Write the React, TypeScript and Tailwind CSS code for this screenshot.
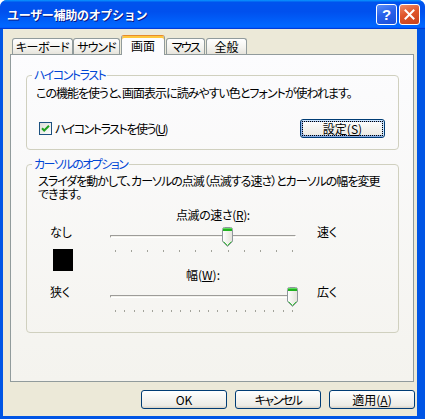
import React from "react";

const tabs = [
  { label: "キーボード", cls: "w-[61px] tracking-[-0.6px]" },
  { label: "サウンド", cls: "w-[47px] tracking-[-1px]" },
  { label: "画面", cls: "w-[44px] ml-[1px]", active: true },
  { label: "マウス", cls: "w-[39px] ml-[1px] tracking-[-1.5px]" },
  { label: "全般", cls: "w-[41px] ml-[1px]" },
];

function Thumb() {
  return (
    <svg width="11" height="20" viewBox="0 0 11 20">
      <defs>
        <linearGradient id="thumbFill" x1="0" x2="1" y1="0" y2="0">
          <stop offset="0" stopColor="#ffffff" />
          <stop offset="1" stopColor="#e3e2da" />
        </linearGradient>
      </defs>
      <path
        d="M0.5 2.5 Q0.5 0.5 2.5 0.5 H8.5 Q10.5 0.5 10.5 2.5 V14.5 L5.5 19.5 L0.5 14.5 Z"
        fill="url(#thumbFill)"
        stroke="#8f979d"
      />
      <rect x="1" y="1" width="9" height="1" fill="#5fdc5f" />
      <rect x="1" y="2" width="9" height="2" fill="#21b221" />
      <path d="M1.5 14.5 L5.5 18.5 L9.5 14.5" fill="none" stroke="#3cc43c" />
    </svg>
  );
}

function Slider({ ticks, value }: { ticks: number; value: number }) {
  const left = 5 + (value * 177) / (ticks - 1) - 5.5;
  return (
    <div className="relative w-[186px] h-[25px] flex flex-col">
      <div className="mt-[8px] h-[3px] rounded-[1px] border-t border-l border-[#9d9c99] border-b border-b-white border-r border-r-white bg-[#f3f2ec]" />
      <div className="mt-[12px] ml-[5px] w-[178px] h-[2px] flex justify-between">
        {Array.from({ length: ticks }).map((_, i) => (
          <span key={i} className="w-px h-[2px] bg-[#a3a39b]" />
        ))}
      </div>
      <div className="absolute top-0" style={{ left }}>
        <Thumb />
      </div>
    </div>
  );
}

function Button({ children, focused }: { children: React.ReactNode; focused?: boolean }) {
  return (
    <div
      className={
        focused
          ? "w-[85px] h-[19px] flex items-center justify-center rounded-[3px] border border-[#003c74] bg-[linear-gradient(180deg,#fff,#ecebe5_86%,#d8d0c4)] shadow-[inset_-1px_1px_#cee7ff,inset_1px_2px_#98b8ea,inset_-2px_2px_#bcd4f6,inset_1px_-1px_#89ade4,inset_2px_-2px_#89ade4]"
          : "w-[86px] h-[19px] flex items-center justify-center rounded-[3px] border border-[#003c74] bg-[linear-gradient(180deg,#fff,#ecebe5_86%,#d8d0c4)]"
      }
    >
      {focused ? (
        <span className="w-[77px] h-[11px] flex items-center justify-center outline-1 outline-dotted outline-black outline-offset-[1px]">
          {children}
        </span>
      ) : (
        children
      )}
    </div>
  );
}

export default function App() {
  return (
    <div className="w-[425px] h-[419px] bg-white font-['Noto_Sans_CJK_JP',sans-serif] text-[12px] leading-[13px] text-black [font-feature-settings:'palt']">
      <div className="w-[425px] h-[419px] flex flex-col rounded-t-[7px] bg-[#0055e5] overflow-hidden">
        {/* title bar */}
        <div className="h-[29px] flex items-center pl-[7px] pr-[5px] bg-[linear-gradient(180deg,#0997ff,#0053ee_8%,#0050ee_40%,#0066ff_88%,#0066ff_93%,#005bff_95%,#003dd7_96%,#003dd7)]">
          <span className="flex-1 font-bold text-white text-[12px] tracking-[-0.3px] [font-feature-settings:normal] [text-shadow:1px_1px_0_#0a1883]">
            ユーザー補助のオプション
          </span>
          <div className="w-[21px] h-[21px] rounded-[3px] border border-white bg-[linear-gradient(160deg,#5c8ff8,#2a62eb_45%,#1d4fd8)] flex items-center justify-center text-white font-bold text-[15px] leading-none font-['Liberation_Sans',sans-serif]">
            ?
          </div>
          <div className="ml-[2px] w-[21px] h-[21px] rounded-[3px] border border-white bg-[linear-gradient(160deg,#ef8c68,#e0562b_45%,#c8411d)] flex items-center justify-center">
            <svg width="11" height="11" viewBox="0 0 11 11">
              <path d="M1.5 1.5 L9.5 9.5 M9.5 1.5 L1.5 9.5" stroke="#fff" strokeWidth="2" strokeLinecap="square" />
            </svg>
          </div>
        </div>

        {/* client area */}
        <div className="ml-[3px] mr-[8px] h-[387px] bg-[#ece9d8] flex flex-col pt-[6px]">
          <div className="ml-[9px] h-[20px] -mb-px flex items-end relative z-10">
            {tabs.map((t) =>
              t.active ? (
                <div
                  key={t.label}
                  className={`${t.cls} h-[20px] flex items-center justify-center pb-[1px] rounded-t-[3px] border-x border-[#919b9c] border-t border-t-[#e68b2c] bg-[#fcfcfe] shadow-[inset_0_2px_#ffc73c]`}
                >
                  {t.label}
                </div>
              ) : (
                <div
                  key={t.label}
                  className={`${t.cls} h-[16px] mb-px flex items-center justify-center rounded-t-[3px] border-x border-t border-[#919b9c] bg-[linear-gradient(180deg,#fff,#f3f2ee_60%,#e6e4dc)]`}
                >
                  {t.label}
                </div>
              )
            )}
          </div>

          <div className="ml-[7px] w-[404px] h-[328px] border border-[#919b9c] bg-[linear-gradient(180deg,#fcfcfe,#f4f3ee)] pt-[13px] pl-[15px]">
            <fieldset className="w-[373px] rounded-[4px] border border-[#d0d0bf] pl-[9px] pr-[13px] pb-[11px]">
              <legend className="-ml-[4px] px-[2px] pb-[2px] text-[#0046d5] tracking-[-1.5px]">ハイコントラスト</legend>
              <p className="mt-[3px] whitespace-nowrap tracking-[-1px]">
                この機能を使うと、画面表示に読みやすい色とフォントが使われます。
              </p>
              <div className="mt-[20px] flex items-center justify-between">
                <div className="ml-[3px] flex items-center gap-[3px]">
                  <svg width="13" height="13" viewBox="0 0 13 13">
                    <defs>
                      <linearGradient id="cbFill" x1="0" y1="0" x2="1" y2="1">
                        <stop offset="0" stopColor="#dcdcd7" />
                        <stop offset="1" stopColor="#ffffff" />
                      </linearGradient>
                    </defs>
                    <rect x="0.5" y="0.5" width="12" height="12" fill="url(#cbFill)" stroke="#1c5180" />
                    <path d="M3 6.2 L5.2 8.5 L10 3.7" fill="none" stroke="#21a121" strokeWidth="2" />
                  </svg>
                  <span className="tracking-[-1.5px]">
                    ハイコントラストを使う(<u>U</u>)
                  </span>
                </div>
                <Button focused>
                  設定(<u>S</u>)
                </Button>
              </div>
            </fieldset>

            <fieldset className="mt-[7px] w-[373px] rounded-[4px] border border-[#d0d0bf] pl-[11px] pb-[20px]">
              <legend className="-ml-[6px] px-[2px] pb-[2px] text-[#0046d5] tracking-[-1.5px]">カーソルのオプション</legend>
              <p className="mt-[2px] whitespace-nowrap tracking-[-1px]">
                スライダを動かして、カーソルの点滅（点滅する速さ）とカーソルの幅を変更
                <br />
                できます。
              </p>

              <div className="mt-[8px] flex">
                <div className="ml-[12px] w-[60px] flex flex-col">
                  <span className="mt-[17px]">なし</span>
                  <div className="mt-[11px] ml-[3px] w-[20px] h-[22px] bg-black" />
                  <span className="mt-[14px]">狭く</span>
                </div>
                <div className="w-[186px] flex flex-col">
                  <span className="ml-[66px] tracking-[-0.4px]">
                    点滅の速さ(<u>R</u>):
                  </span>
                  <div className="mt-[6px]">
                    <Slider ticks={12} value={7} />
                  </div>
                  <span className="mt-[16px] ml-[76px]">
                    幅(<u>W</u>):
                  </span>
                  <div className="mt-[6px]">
                    <Slider ticks={20} value={19} />
                  </div>
                </div>
                <div className="ml-[21px] flex flex-col">
                  <span className="mt-[17px]">速く</span>
                  <span className="mt-[47px]">広く</span>
                </div>
              </div>
            </fieldset>
          </div>

          <div className="mt-[8px] mr-[2px] flex justify-end gap-[8px]">
            <Button>OK</Button>
            <Button>
              <span className="tracking-[-1.5px]">キャンセル</span>
            </Button>
            <Button>
              適用(<u>A</u>)
            </Button>
          </div>
        </div>
      </div>
    </div>
  );
}
